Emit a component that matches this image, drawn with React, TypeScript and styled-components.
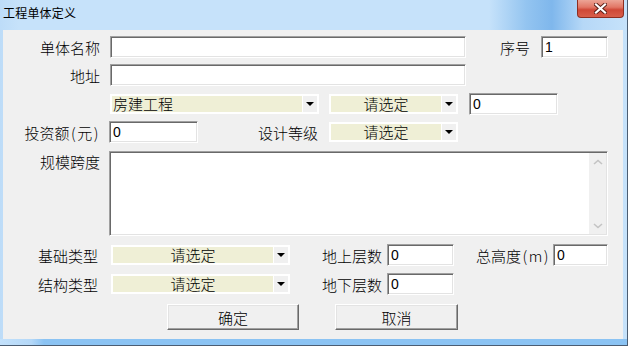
import React from "react";
import styled, { createGlobalStyle } from "styled-components";

const GlobalStyle = createGlobalStyle`
  html, body {
    margin: 0;
    padding: 0;
    background: #ffffff;
  }
  body {
    width: 630px;
    height: 348px;
    overflow: hidden;
    font-family: "Noto Sans CJK SC", "Liberation Sans", sans-serif;
    font-weight: 300;
    color: #000;
  }
`;

const Window = styled.div`
  width: 628px;
  height: 346px;
  box-sizing: border-box;
  border-right: 1px solid #4b5d72;
  border-bottom: 1px solid #4b5d72;
  display: flex;
  flex-direction: column;
  background: linear-gradient(
    to right,
    #bddcf8 0%,
    #c6e2fa 3%,
    #c6e2fa 78%,
    #93c4f0 84%,
    #7fb7ec 88%,
    #b6d8f7 93%,
    #c6e2fa 100%
  );
`;

const TitleBar = styled.div`
  height: 30px;
  display: flex;
  justify-content: space-between;
  align-items: flex-start;
`;

const Title = styled.span`
  padding: 5px 0 0 3px;
  font-size: 12px;
  line-height: 15px;
  font-weight: 400;
  letter-spacing: 0.2px;
`;

const CloseButton = styled.div`
  width: 47px;
  height: 18px;
  margin-right: 3px;
  box-sizing: border-box;
  border: 1px solid #8d2e22;
  border-top: none;
  border-radius: 0 0 4px 4px;
  display: flex;
  align-items: center;
  justify-content: center;
  background: linear-gradient(#eca596 0%, #e27766 42%, #cf4837 58%, #d85e4a 100%);
`;

const Client = styled.div`
  height: 309px;
  margin: 0 4px 0 3px;
  padding-top: 6px;
  box-sizing: border-box;
  background: #f0f0f0;
`;

const FrameBottom = styled.div`
  flex: 1;
  background: linear-gradient(to right, #c3e1fb 0%, #b4d8f8 5%, #8bc3f3 7%, #8bc3f3 100%);
`;

const Row = styled.div<{ $h: number; $mt?: number; $top?: boolean }>`
  display: flex;
  align-items: ${(p) => (p.$top ? "flex-start" : "center")};
  height: ${(p) => p.$h}px;
  margin-top: ${(p) => p.$mt ?? 0}px;
`;

const Label = styled.span<{ $w: number; $ml?: number; $left?: boolean; $pt?: number }>`
  flex-shrink: 0;
  width: ${(p) => p.$w}px;
  margin-left: ${(p) => p.$ml ?? 0}px;
  padding-top: ${(p) => p.$pt ?? 0}px;
  text-align: ${(p) => (p.$left ? "left" : "right")};
  font-size: 15px;
  line-height: 17px;
  white-space: nowrap;
`;

// half-width brackets in the dialog font are wider than in Noto
const Paren = styled.span`
  padding: 0 1.5px;
`;

const sunken = `
  border: 1px solid;
  border-color: #a0a0a0 #ffffff #ffffff #a0a0a0;
  box-shadow: inset 1px 1px 0 #696969, inset -1px -1px 0 #e3e3e3;
`;

const TextInput = styled.input<{ $w: number; $ml?: number }>`
  flex-shrink: 0;
  width: ${(p) => p.$w}px;
  height: 22px;
  margin: 0 0 0 ${(p) => p.$ml ?? 0}px;
  padding: 0 0 1px 3px;
  box-sizing: border-box;
  ${sunken}
  background: #ffffff;
  outline: none;
  font-family: "Liberation Sans", sans-serif;
  font-size: 14px;
  color: #000;
`;

const Combo = styled.div<{ $w: number; $ml?: number }>`
  flex-shrink: 0;
  width: ${(p) => p.$w}px;
  height: 20px;
  margin-left: ${(p) => p.$ml ?? 0}px;
  padding: 2px;
  box-sizing: border-box;
  background: #ffffff;
  display: flex;
  gap: 1px;
`;

const ComboField = styled.div<{ $left?: boolean }>`
  flex: 1;
  height: 16px;
  background: #efefd6;
  font-size: 15px;
  line-height: 16px;
  padding-left: ${(p) => (p.$left ? 1 : 0)}px;
  text-align: ${(p) => (p.$left ? "left" : "center")};
  white-space: nowrap;
`;

const ComboArrow = styled.div`
  width: 14px;
  background: #f0f0f0;
  display: flex;
  align-items: center;
  justify-content: center;
  &::after {
    content: "";
    border-left: 4px solid transparent;
    border-right: 4px solid transparent;
    border-top: 4px solid #000;
  }
`;

const TextBox = styled.div<{ $w: number; $h: number; $ml?: number }>`
  flex-shrink: 0;
  width: ${(p) => p.$w}px;
  height: ${(p) => p.$h}px;
  margin-left: ${(p) => p.$ml ?? 0}px;
  box-sizing: border-box;
  ${sunken}
  background: #ffffff;
  display: flex;
  padding: 1px;
`;

const Area = styled.textarea`
  flex: 1;
  border: none;
  outline: none;
  resize: none;
  background: transparent;
  overflow: hidden;
  margin: 0;
`;

const ScrollTrack = styled.div`
  width: 17px;
  background: #f0f0f0;
  display: flex;
  flex-direction: column;
  justify-content: space-between;
  align-items: center;
  padding: 6px 0 5px;
  box-sizing: border-box;
`;

const Button = styled.button<{ $w: number; $ml?: number }>`
  flex-shrink: 0;
  width: ${(p) => p.$w}px;
  height: 26px;
  margin-left: ${(p) => p.$ml ?? 0}px;
  padding: 0;
  box-sizing: border-box;
  border: 1px solid;
  border-color: #ffffff #696969 #696969 #ffffff;
  box-shadow: inset -1px -1px 0 #a0a0a0, inset 1px 1px 0 #e3e3e3;
  background: #f0f0f0;
  font-family: "Noto Sans CJK SC", sans-serif;
  font-weight: 300;
  font-size: 15px;
  line-height: 17px;
  color: #000;
`;

const Chevron: React.FC<{ up?: boolean }> = ({ up }) => (
  <svg width="10" height="6" viewBox="0 0 10 6">
    <polyline
      points={up ? "1,5 5,1.5 9,5" : "1,1 5,4.5 9,1"}
      fill="none"
      stroke="#c4c4c4"
      strokeWidth="1.6"
    />
  </svg>
);

const CloseGlyph = () => (
  <svg width="13" height="11" viewBox="0 0 13 11">
    <path d="M2 1.5 L11 9.5 M11 1.5 L2 9.5" stroke="#5a1e16" strokeWidth="4" strokeLinecap="square" />
    <path d="M2 1.5 L11 9.5 M11 1.5 L2 9.5" stroke="#ffffff" strokeWidth="2.2" strokeLinecap="square" />
  </svg>
);

const App: React.FC = () => {
  return (
    <>
      <GlobalStyle />
      <Window>
        <TitleBar>
          <Title>工程单体定义</Title>
          <CloseButton>
            <CloseGlyph />
          </CloseButton>
        </TitleBar>
        <Client>
          <Row $h={22}>
            <Label $w={97}>单体名称</Label>
            <TextInput $w={356} $ml={10} defaultValue="" />
            <Label $w={30} $ml={34} $left>
              序号
            </Label>
            <TextInput $w={67} $ml={11} defaultValue="1" />
          </Row>
          <Row $h={22} $mt={6}>
            <Label $w={97}>地址</Label>
            <TextInput $w={356} $ml={10} defaultValue="" />
          </Row>
          <Row $h={22} $mt={7}>
            <Combo $w={209} $ml={107}>
              <ComboField $left>房建工程</ComboField>
              <ComboArrow />
            </Combo>
            <Combo $w={129} $ml={10}>
              <ComboField>请选定</ComboField>
              <ComboArrow />
            </Combo>
            <TextInput $w={89} $ml={11} defaultValue="0" />
          </Row>
          <Row $h={22} $mt={6}>
            <Label $w={97}>
              投资额<Paren>(</Paren>元<Paren>)</Paren>
            </Label>
            <TextInput $w={89} $ml={9} defaultValue="0" />
            <Label $w={60} $ml={60} $left>
              设计等级
            </Label>
            <Combo $w={129} $ml={11}>
              <ComboField>请选定</ComboField>
              <ComboArrow />
            </Combo>
          </Row>
          <Row $h={85} $mt={8} $top>
            <Label $w={97} $pt={2}>
              规模跨度
            </Label>
            <TextBox $w={499} $h={85} $ml={9}>
              <Area />
              <ScrollTrack>
                <Chevron up />
                <Chevron />
              </ScrollTrack>
            </TextBox>
          </Row>
          <Row $h={22} $mt={8}>
            <Label $w={95}>基础类型</Label>
            <Combo $w={179} $ml={13}>
              <ComboField>请选定</ComboField>
              <ComboArrow />
            </Combo>
            <Label $w={60} $ml={32} $left>
              地上层数
            </Label>
            <TextInput $w={67} $ml={5} defaultValue="0" />
            <Label $w={69} $ml={22} $left>
              总高度<Paren>(</Paren>m<Paren>)</Paren>
            </Label>
            <TextInput $w={55} $ml={8} defaultValue="0" />
          </Row>
          <Row $h={22} $mt={7}>
            <Label $w={95}>结构类型</Label>
            <Combo $w={179} $ml={13}>
              <ComboField>请选定</ComboField>
              <ComboArrow />
            </Combo>
            <Label $w={60} $ml={32} $left>
              地下层数
            </Label>
            <TextInput $w={67} $ml={5} defaultValue="0" />
          </Row>
          <Row $h={26} $mt={9}>
            <Button $w={132} $ml={164}>
              确定
            </Button>
            <Button $w={123} $ml={36}>
              取消
            </Button>
          </Row>
        </Client>
        <FrameBottom />
      </Window>
    </>
  );
};

export default App;
